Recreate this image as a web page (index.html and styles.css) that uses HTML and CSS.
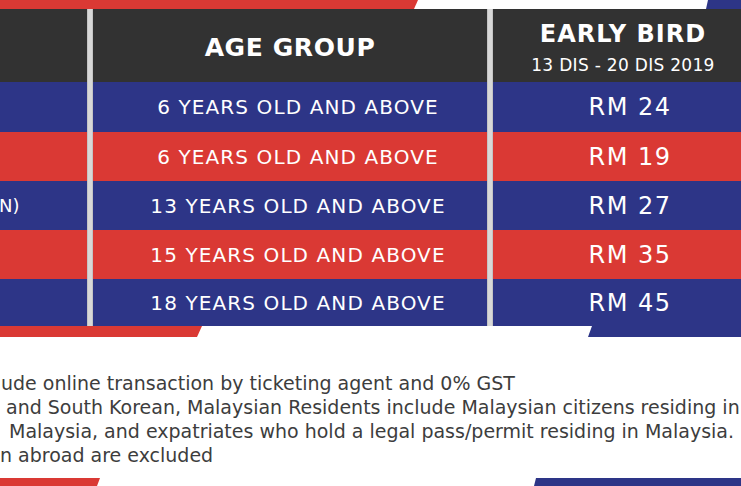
FILE: index.html
```html
<!DOCTYPE html>
<html>
<head>
<meta charset="utf-8">
<link rel="stylesheet" href="styles.css">
</head>
<body>
<div class="page">
  <svg class="stripe top" width="741" height="9" viewBox="0 0 741 9">
    <polygon points="0,0 418,0 414,9 0,9" fill="#da3934"/>
    <polygon points="708,0 741,0 741,9 706,9" fill="#2d3587"/>
  </svg>
  <div class="table">
    <div class="sep sep1"></div>
    <div class="sep sep2"></div>

    <div class="cell head c1"></div>
    <div class="cell head c2"><span class="h-age">AGE GROUP</span></div>
    <div class="cell head c3"><span class="h-early">EARLY BIRD</span><span class="h-date">13 DIS - 20 DIS 2019</span></div>

    <div class="cell blue c1"></div>
    <div class="cell blue c2 age">6 YEARS OLD AND ABOVE</div>
    <div class="cell blue c3 price">RM 24</div>

    <div class="cell red c1"></div>
    <div class="cell red c2 age">6 YEARS OLD AND ABOVE</div>
    <div class="cell red c3 price">RM 19</div>

    <div class="cell blue c1 cat">N)</div>
    <div class="cell blue c2 age">13 YEARS OLD AND ABOVE</div>
    <div class="cell blue c3 price">RM 27</div>

    <div class="cell red c1"></div>
    <div class="cell red c2 age">15 YEARS OLD AND ABOVE</div>
    <div class="cell red c3 price">RM 35</div>

    <div class="cell blue c1"></div>
    <div class="cell blue c2 age">18 YEARS OLD AND ABOVE</div>
    <div class="cell blue c3 price">RM 45</div>
  </div>
  <svg class="stripe mid" width="741" height="11" viewBox="0 0 741 11">
    <polygon points="0,0 202,0 197,11 0,11" fill="#da3934"/>
    <polygon points="592,0 741,0 741,11 588,11" fill="#2d3587"/>
  </svg>
  <div class="notes">
    <p class="l1">ude online transaction by ticketing agent and 0% GST</p>
    <p class="l2">and South Korean, Malaysian Residents include Malaysian citizens residing in</p>
    <p class="l3">Malaysia, and expatriates who hold a legal pass/permit residing in Malaysia.</p>
    <p class="l4">n abroad are excluded</p>
  </div>
  <svg class="stripe bottom" width="741" height="8" viewBox="0 0 741 8">
    <polygon points="0,0 100,0 97,8 0,8" fill="#da3934"/>
    <polygon points="536,0 741,0 741,8 534,8" fill="#2d3587"/>
  </svg>
</div>
</body>
</html>
```
FILE: styles.css
```css
html, body {
  margin: 0;
  padding: 0;
  background: #ffffff;
}
.page {
  width: 741px;
  height: 486px;
  overflow: hidden;
  display: flex;
  flex-direction: column;
}
.stripe {
  display: block;
  flex: none;
}
.table {
  display: grid;
  grid-template-columns: 87px 6px 394px 6px 260px;
  grid-template-rows: 73px 50px 49px 49px 49px 47px;
  font-family: "DejaVu Sans", sans-serif;
  color: #ffffff;
  flex: none;
}
.sep {
  grid-row: 1 / -1;
  background: #d8d8d8;
  box-shadow: inset 1px 0 0 #c4c4c4, inset -1px 0 0 #c4c4c4;
}
.sep1 { grid-column: 2; }
.sep2 { grid-column: 4; }
.c1 { grid-column: 1; }
.c2 { grid-column: 3; }
.c3 { grid-column: 5; }
.cell {
  display: flex;
  flex-direction: column;
  align-items: center;
  justify-content: center;
}
.head { background: #323232; }
.blue { background: #2d3587; }
.red { background: #da3934; }
.h-age {
  font-weight: bold;
  font-size: 25px;
  letter-spacing: 0.6px;
  padding-top: 4px;
}
.c3.head {
  padding-top: 4px;
}
.h-early {
  font-weight: bold;
  font-size: 24px;
  line-height: 28px;
  letter-spacing: 1px;
}
.h-date {
  font-size: 17px;
  line-height: 22px;
  margin-top: 6px;
  letter-spacing: 0.3px;
}
.age {
  font-size: 20px;
  letter-spacing: 1.1px;
  padding-left: 16px;
}
.price {
  font-size: 24px;
  letter-spacing: 1.5px;
  padding-left: 14px;
}
.cat {
  align-items: flex-start;
  font-size: 18px;
  margin-left: -1px;
}
.notes {
  flex: 1;
  padding-top: 34px;
  font-family: "DejaVu Sans", sans-serif;
  font-size: 19px;
  line-height: 24px;
  color: #3d3d3d;
  white-space: nowrap;
}
.notes p {
  margin: 0;
}
.l1 { padding-left: 1px; }
.l2 { padding-left: 6px; }
.l3 { padding-left: 9px; }
.l4 { padding-left: 0; }
```
